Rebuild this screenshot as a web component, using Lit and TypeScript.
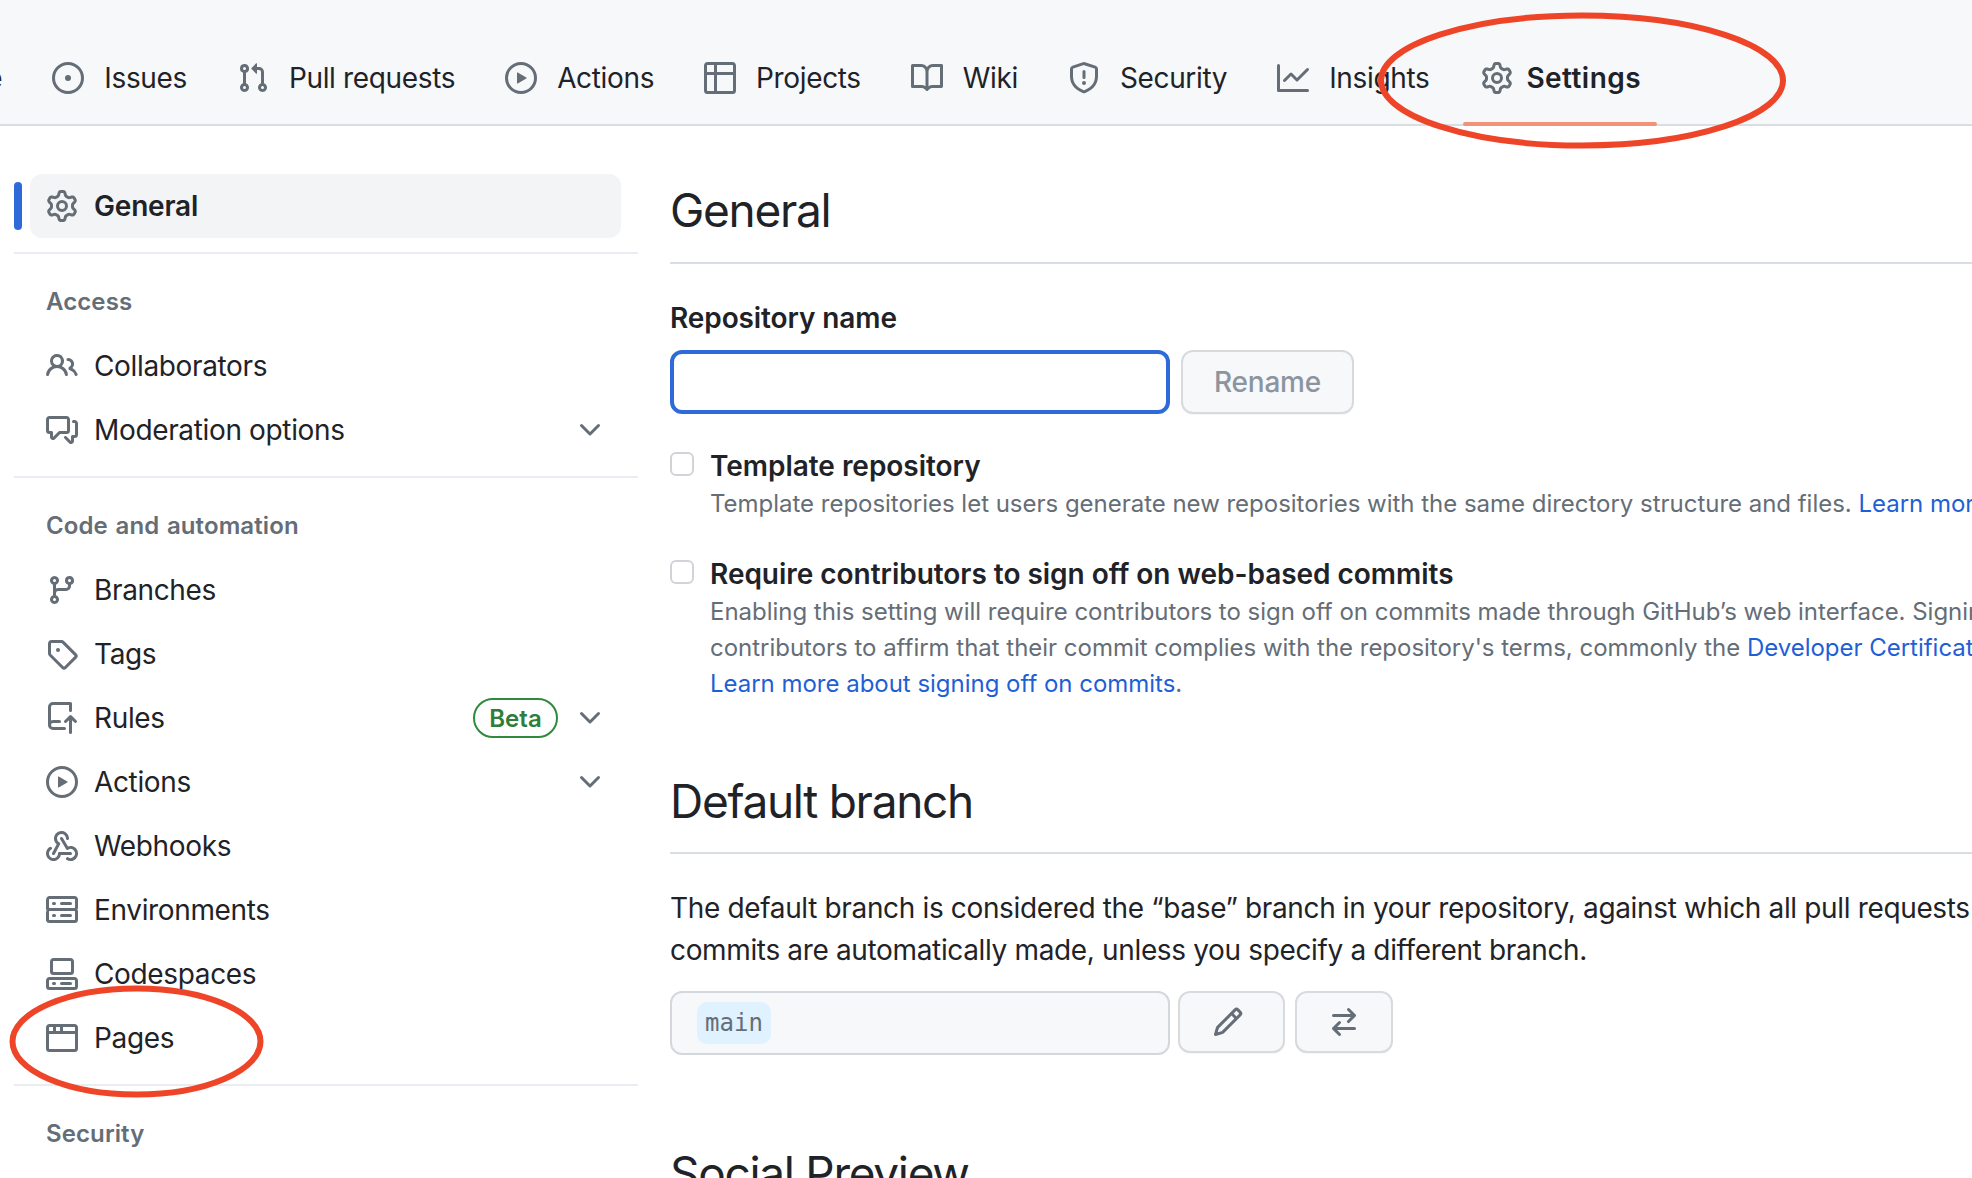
import { LitElement, html, css, svg } from "lit";
import { customElement } from "lit/decorators.js";

const P: Record<string, string> = {
  code: "m11.28 3.22 4.25 4.25a.75.75 0 0 1 0 1.06l-4.25 4.25a.749.749 0 0 1-1.275-.326.749.749 0 0 1 .215-.734L13.94 8l-3.72-3.72a.749.749 0 0 1 .326-1.275.749.749 0 0 1 .734.215Zm-6.56 0a.751.751 0 0 1 1.042.018.751.751 0 0 1 .018 1.042L2.06 8l3.72 3.72a.749.749 0 0 1-.326 1.275.749.749 0 0 1-.734-.215L.47 8.53a.75.75 0 0 1 0-1.06Z",
  issue: "M8 9.5a1.5 1.5 0 1 0 0-3 1.5 1.5 0 0 0 0 3ZM8 0a8 8 0 1 1 0 16A8 8 0 0 1 8 0ZM1.5 8a6.5 6.5 0 1 0 13 0 6.5 6.5 0 0 0-13 0Z",
  pull: "M1.5 3.25a2.25 2.25 0 1 1 3 2.122v5.256a2.251 2.251 0 1 1-1.5 0V5.372A2.25 2.25 0 0 1 1.5 3.25Zm5.677-.177L9.573.677A.25.25 0 0 1 10 .854V2.5h1A2.5 2.5 0 0 1 13.5 5v5.628a2.251 2.251 0 1 1-1.5 0V5a1 1 0 0 0-1-1h-1v1.646a.25.25 0 0 1-.427.177L7.177 3.427a.25.25 0 0 1 0-.354ZM3.75 2.5a.75.75 0 1 0 0 1.5.75.75 0 0 0 0-1.5Zm0 9.5a.75.75 0 1 0 0 1.5.75.75 0 0 0 0-1.5Zm8.25.75a.75.75 0 1 0 1.5 0 .75.75 0 0 0-1.5 0Z",
  play: "M8 0a8 8 0 1 1 0 16A8 8 0 0 1 8 0ZM1.5 8a6.5 6.5 0 1 0 13 0 6.5 6.5 0 0 0-13 0Zm4.879-2.773 4.264 2.559a.25.25 0 0 1 0 .428l-4.264 2.559A.25.25 0 0 1 6 10.559V5.442a.25.25 0 0 1 .379-.215Z",
  table: "M0 1.75C0 .784.784 0 1.75 0h12.5C15.216 0 16 .784 16 1.75v12.5A1.75 1.75 0 0 1 14.25 16H1.75A1.75 1.75 0 0 1 0 14.25ZM6.5 6.5v8h7.75a.25.25 0 0 0 .25-.25V6.5Zm8-1.5V1.75a.25.25 0 0 0-.25-.25H6.5V5Zm-13 1.5v7.75c0 .138.112.25.25.25H5v-8ZM5 5V1.5H1.75a.25.25 0 0 0-.25.25V5Z",
  book: "M0 1.75A.75.75 0 0 1 .75 1h4.253c1.227 0 2.317.59 3 1.501A3.743 3.743 0 0 1 11.006 1h4.245a.75.75 0 0 1 .75.75v10.5a.75.75 0 0 1-.75.75h-4.507a2.25 2.25 0 0 0-1.591.659l-.622.621a.75.75 0 0 1-1.06 0l-.622-.621A2.25 2.25 0 0 0 5.258 13H.75a.75.75 0 0 1-.75-.75Zm7.251 10.324.004-5.073-.002-2.253A2.25 2.25 0 0 0 5.003 2.5H1.5v9h3.757a3.75 3.75 0 0 1 1.994.574ZM8.755 4.75l-.004 7.322a3.752 3.752 0 0 1 1.992-.572H14.5v-9h-3.495a2.25 2.25 0 0 0-2.25 2.25Z",
  shield: "M7.467.133a1.748 1.748 0 0 1 1.066 0l5.25 1.68A1.75 1.75 0 0 1 15 3.48V7c0 1.566-.32 3.182-1.303 4.682-.983 1.498-2.585 2.813-5.032 3.855a1.697 1.697 0 0 1-1.33 0c-2.447-1.042-4.049-2.357-5.032-3.855C1.32 10.182 1 8.566 1 7V3.48a1.75 1.75 0 0 1 1.217-1.667Zm.61 1.429a.25.25 0 0 0-.153 0l-5.25 1.68a.25.25 0 0 0-.174.238V7c0 1.358.275 2.666 1.057 3.86.784 1.194 2.121 2.34 4.366 3.297a.196.196 0 0 0 .154 0c2.245-.956 3.582-2.104 4.366-3.298C13.225 9.666 13.5 8.36 13.5 7V3.48a.251.251 0 0 0-.174-.237l-5.25-1.68ZM8.75 4.75v3a.75.75 0 0 1-1.5 0v-3a.75.75 0 0 1 1.5 0ZM9 10.5a1 1 0 1 1-2 0 1 1 0 0 1 2 0Z",
  graph: "M1.5 1.75V13.5h13.75a.75.75 0 0 1 0 1.5H.75a.75.75 0 0 1-.75-.75V1.75a.75.75 0 0 1 1.5 0Zm14.28 2.53-5.25 5.25a.75.75 0 0 1-1.06 0L7 7.06 4.28 9.78a.751.751 0 0 1-1.042-.018.751.751 0 0 1-.018-1.042l3.25-3.25a.75.75 0 0 1 1.06 0L10 7.94l4.72-4.72a.751.751 0 0 1 1.042.018.751.751 0 0 1 .018 1.042Z",
  gear: "M8 0a8.2 8.2 0 0 1 .701.031C9.444.095 9.99.645 10.16 1.29l.288 1.107c.018.066.079.158.212.224.231.114.454.243.668.386.123.082.233.09.299.071l1.103-.303c.644-.176 1.392.021 1.82.63.27.385.506.792.704 1.218.315.675.111 1.422-.364 1.891l-.814.806c-.049.048-.098.147-.088.294.016.257.016.515 0 .772-.01.147.038.246.088.294l.814.806c.475.469.679 1.216.364 1.891a7.977 7.977 0 0 1-.704 1.217c-.428.61-1.176.807-1.82.63l-1.102-.302c-.067-.019-.177-.011-.3.071a5.909 5.909 0 0 1-.668.386c-.133.066-.194.158-.211.224l-.29 1.106c-.168.646-.715 1.196-1.458 1.26a8.006 8.006 0 0 1-1.402 0c-.743-.064-1.289-.614-1.458-1.26l-.289-1.106c-.018-.066-.079-.158-.212-.224a5.738 5.738 0 0 1-.668-.386c-.123-.082-.233-.09-.299-.071l-1.103.303c-.644.176-1.392-.021-1.82-.63a8.12 8.12 0 0 1-.704-1.218c-.315-.675-.111-1.422.363-1.891l.815-.806c.05-.048.098-.147.088-.294a6.214 6.214 0 0 1 0-.772c.01-.147-.038-.246-.088-.294l-.815-.806C.635 6.045.431 5.298.746 4.623a7.92 7.92 0 0 1 .704-1.217c.428-.61 1.176-.807 1.82-.63l1.102.302c.067.019.177.011.3-.071.214-.143.437-.272.668-.386.133-.066.194-.158.211-.224l.29-1.106C6.009.645 6.556.095 7.299.03 7.53.01 7.764 0 8 0Zm-.571 1.525c-.036.003-.108.036-.137.146l-.289 1.105c-.147.561-.549.967-.998 1.189-.173.086-.34.183-.5.29-.417.278-.97.423-1.529.27l-1.103-.303c-.109-.03-.175.016-.195.045-.22.312-.412.644-.573.99-.014.031-.021.11.059.19l.815.806c.411.406.562.957.53 1.456a4.709 4.709 0 0 0 0 .582c.032.499-.119 1.05-.53 1.456l-.815.806c-.081.08-.073.159-.059.19.162.346.353.677.573.989.02.03.085.076.195.046l1.102-.303c.56-.153 1.113-.008 1.53.27.161.107.328.204.501.29.447.222.85.629.997 1.189l.289 1.105c.029.109.101.143.137.146a6.6 6.6 0 0 0 1.142 0c.036-.003.108-.036.137-.146l.289-1.105c.147-.561.549-.967.998-1.189.173-.086.34-.183.5-.29.417-.278.97-.423 1.529-.27l1.103.303c.109.029.175-.016.195-.045.22-.313.411-.644.573-.99.014-.031.021-.11-.059-.19l-.815-.806c-.411-.406-.562-.957-.53-1.456a4.709 4.709 0 0 0 0-.582c-.032-.499.119-1.05.53-1.456l.815-.806c.081-.08.073-.159.059-.19a6.464 6.464 0 0 0-.573-.989c-.02-.03-.085-.076-.195-.046l-1.102.303c-.56.153-1.113.008-1.53-.27a4.44 4.44 0 0 0-.501-.29c-.447-.222-.85-.629-.997-1.189l-.289-1.105c-.029-.11-.101-.143-.137-.146a6.6 6.6 0 0 0-1.142 0ZM11 8a3 3 0 1 1-6 0 3 3 0 0 1 6 0ZM9.5 8a1.5 1.5 0 1 0-3.001.001A1.5 1.5 0 0 0 9.5 8Z",
  people: "M2 5.5a3.5 3.5 0 1 1 5.898 2.549 5.508 5.508 0 0 1 3.034 4.084.75.75 0 1 1-1.482.235 4 4 0 0 0-7.9 0 .75.75 0 0 1-1.482-.236A5.507 5.507 0 0 1 3.102 8.05 3.493 3.493 0 0 1 2 5.5ZM11 4a3.001 3.001 0 0 1 2.22 5.018 5.01 5.01 0 0 1 2.56 3.012.749.749 0 0 1-.885.954.752.752 0 0 1-.549-.514 3.507 3.507 0 0 0-2.522-2.372.75.75 0 0 1-.574-.73v-.352a.75.75 0 0 1 .416-.672A1.5 1.5 0 0 0 11 5.5.75.75 0 0 1 11 4Zm-5.5-.5a2 2 0 1 0-.001 3.999A2 2 0 0 0 5.5 3.5Z",
  discussion: "M1.75 1h8.5c.966 0 1.75.784 1.75 1.75v5.5A1.75 1.75 0 0 1 10.25 10H7.061l-2.574 2.573A1.458 1.458 0 0 1 2 11.543V10h-.25A1.75 1.75 0 0 1 0 8.25v-5.5C0 1.784.784 1 1.75 1ZM1.5 2.75v5.5c0 .138.112.25.25.25h1a.75.75 0 0 1 .75.75v2.19l2.72-2.72a.749.749 0 0 1 .53-.22h3.5a.25.25 0 0 0 .25-.25v-5.5a.25.25 0 0 0-.25-.25h-8.5a.25.25 0 0 0-.25.25Zm13 2a.25.25 0 0 0-.25-.25h-.5a.75.75 0 0 1 0-1.5h.5c.966 0 1.75.784 1.75 1.75v5.5A1.75 1.75 0 0 1 14.25 12H14v1.543a1.458 1.458 0 0 1-2.487 1.03L9.22 12.28a.749.749 0 0 1 .326-1.275.749.749 0 0 1 .734.215l2.22 2.22v-2.19a.75.75 0 0 1 .75-.75h1a.25.25 0 0 0 .25-.25Z",
  branch: "M9.5 3.25a2.25 2.25 0 1 1 3 2.122V6A2.5 2.5 0 0 1 10 8.5H6a1 1 0 0 0-1 1v1.128a2.251 2.251 0 1 1-1.5 0V5.372a2.25 2.25 0 1 1 1.5 0v1.836A2.493 2.493 0 0 1 6 7h4a1 1 0 0 0 1-1v-.628A2.25 2.25 0 0 1 9.5 3.25Zm-6 0a.75.75 0 1 0 1.5 0 .75.75 0 0 0-1.5 0Zm8.25-.75a.75.75 0 1 0 0 1.5.75.75 0 0 0 0-1.5ZM4.25 12a.75.75 0 1 0 0 1.5.75.75 0 0 0 0-1.5Z",
  tag: "M1 7.775V2.75C1 1.784 1.784 1 2.75 1h5.025c.464 0 .91.184 1.238.513l6.25 6.25a1.75 1.75 0 0 1 0 2.474l-5.026 5.026a1.75 1.75 0 0 1-2.474 0l-6.25-6.25A1.752 1.752 0 0 1 1 7.775Zm1.5 0c0 .066.026.13.073.177l6.25 6.25a.25.25 0 0 0 .354 0l5.025-5.025a.25.25 0 0 0 0-.354l-6.25-6.25a.25.25 0 0 0-.177-.073H2.75a.25.25 0 0 0-.25.25ZM6 5a1 1 0 1 1 0 2 1 1 0 0 1 0-2Z",
  push: "M1 2.5A2.5 2.5 0 0 1 3.5 0h8.75a.75.75 0 0 1 .75.75v3.5a.75.75 0 0 1-1.5 0V1.5h-8a1 1 0 0 0-1 1v6.708A2.493 2.493 0 0 1 3.5 9h3.25a.75.75 0 0 1 0 1.5H3.5a1 1 0 0 0 0 2h5.75a.75.75 0 0 1 0 1.5H3.5A2.5 2.5 0 0 1 1 11.5Zm13.23 7.79h-.001l-1.224-1.224v6.184a.75.75 0 0 1-1.5 0V9.066L10.28 10.29a.75.75 0 0 1-1.06-1.061l2.505-2.504a.75.75 0 0 1 1.06 0L15.29 9.23a.751.751 0 0 1-.018 1.042.751.751 0 0 1-1.042.018Z",
  webhook: "M5.5 4.25a2.25 2.25 0 0 1 4.5 0 .75.75 0 0 0 1.5 0 3.75 3.75 0 1 0-6.14 2.889l-2.272 4.258a.75.75 0 0 0 1.324.706L7 7.25a.75.75 0 0 0-.309-1.015A2.25 2.25 0 0 1 5.5 4.25ZM7.364 3.607a.75.75 0 0 1 1.03.257l2.608 4.349a3.75 3.75 0 1 1-.628 6.785.75.75 0 0 1 .752-1.299 2.25 2.25 0 1 0-.033-3.88.75.75 0 0 1-1.03-.256L7.107 4.636a.75.75 0 0 1 .257-1.03ZM2.9 8.776A.75.75 0 0 1 2.625 9.8 2.25 2.25 0 1 0 6 11.75a.75.75 0 0 1 .75-.751h5.5a.75.75 0 0 1 0 1.5H7.425a3.751 3.751 0 1 1-5.55-3.998.75.75 0 0 1 1.024.274Z",
  server: "M1.75 1h12.5c.966 0 1.75.784 1.75 1.75v4c0 .372-.116.717-.314 1 .198.283.314.628.314 1v4a1.75 1.75 0 0 1-1.75 1.75H1.75A1.75 1.75 0 0 1 0 13.25v-4c0-.372.116-.717.314-1a1.739 1.739 0 0 1-.314-1v-4C0 1.784.784 1 1.75 1ZM1.5 2.75v4c0 .138.112.25.25.25h12.5a.25.25 0 0 0 .25-.25v-4a.25.25 0 0 0-.25-.25H1.75a.25.25 0 0 0-.25.25Zm.25 5.75a.25.25 0 0 0-.25.25v4c0 .138.112.25.25.25h12.5a.25.25 0 0 0 .25-.25v-4a.25.25 0 0 0-.25-.25ZM7 4.75A.75.75 0 0 1 7.75 4h4.5a.75.75 0 0 1 0 1.5h-4.5A.75.75 0 0 1 7 4.75ZM7.75 10h4.5a.75.75 0 0 1 0 1.5h-4.5a.75.75 0 0 1 0-1.5ZM3 4.75A.75.75 0 0 1 3.75 4h.5a.75.75 0 0 1 0 1.5h-.5A.75.75 0 0 1 3 4.75ZM3.75 10h.5a.75.75 0 0 1 0 1.5h-.5a.75.75 0 0 1 0-1.5Z",
  codespaces: "M0 11.25c0-.966.784-1.75 1.75-1.75h12.5c.966 0 1.75.784 1.75 1.75v3A1.75 1.75 0 0 1 14.25 16H1.75A1.75 1.75 0 0 1 0 14.25Zm2-9.5C2 .784 2.784 0 3.75 0h8.5C13.216 0 14 .784 14 1.75v5a1.75 1.75 0 0 1-1.75 1.75h-8.5A1.75 1.75 0 0 1 2 6.75Zm1.75-.25a.25.25 0 0 0-.25.25v5c0 .138.112.25.25.25h8.5a.25.25 0 0 0 .25-.25v-5a.25.25 0 0 0-.25-.25Zm-2 9.5a.25.25 0 0 0-.25.25v3c0 .138.112.25.25.25h12.5a.25.25 0 0 0 .25-.25v-3a.25.25 0 0 0-.25-.25ZM7 12.75a.75.75 0 0 1 .75-.75h4.5a.75.75 0 0 1 0 1.5h-4.5a.75.75 0 0 1-.75-.75Zm-4 0a.75.75 0 0 1 .75-.75h.5a.75.75 0 0 1 0 1.5h-.5a.75.75 0 0 1-.75-.75Z",
  browser: "M0 2.75C0 1.784.784 1 1.75 1h12.5c.966 0 1.75.784 1.75 1.75v10.5A1.75 1.75 0 0 1 14.25 15H1.75A1.75 1.75 0 0 1 0 13.25ZM14.5 6h-13v7.25c0 .138.112.25.25.25h12.5a.25.25 0 0 0 .25-.25Zm-6-3.5v2h6V2.75a.25.25 0 0 0-.25-.25ZM5 2.5v2h2v-2Zm-3.25 0a.25.25 0 0 0-.25.25V4.5h2v-2Z",
  chevron: "M12.78 5.22a.749.749 0 0 1 0 1.06l-4.25 4.25a.749.749 0 0 1-1.06 0L3.22 6.28a.749.749 0 1 1 1.06-1.06L8 8.939l3.72-3.719a.749.749 0 0 1 1.06 0Z",
  pencil: "M11.013 1.427a1.75 1.75 0 0 1 2.474 0l1.086 1.086a1.75 1.75 0 0 1 0 2.474l-8.61 8.61c-.21.21-.47.364-.756.445l-3.251.93a.75.75 0 0 1-.927-.928l.929-3.25c.081-.286.235-.547.445-.758l8.61-8.61Zm.176 4.823L9.75 4.81l-6.286 6.287a.253.253 0 0 0-.064.108l-.558 1.953 1.953-.558a.253.253 0 0 0 .108-.064Zm1.238-3.763a.25.25 0 0 0-.354 0L10.811 3.75l1.439 1.44 1.263-1.263a.25.25 0 0 0 0-.354Z",
  swap: "M5.22 14.78a.75.75 0 0 0 1.06-1.06L4.56 12h8.69a.75.75 0 0 0 0-1.5H4.56l1.72-1.72a.75.75 0 0 0-1.06-1.06l-3 3a.75.75 0 0 0 0 1.06l3 3Zm5.56-6.5a.75.75 0 1 1-1.06-1.06l1.72-1.72H2.75a.75.75 0 0 1 0-1.5h8.69L9.72 2.28a.75.75 0 0 1 1.06-1.06l3 3a.75.75 0 0 1 0 1.06l-3 3Z",
};

const icon = (n: string) =>
  html`<svg class="icon" viewBox="0 0 16 16" aria-hidden="true">${svg`<path d=${P[n]}></path>`}</svg>`;

const TABS = [
  ["code", "Code"], ["issue", "Issues"], ["pull", "Pull requests"], ["play", "Actions"],
  ["table", "Projects"], ["book", "Wiki"], ["shield", "Security"], ["graph", "Insights"], ["gear", "Settings"],
];

type Row = { i: string; t: string; chev?: boolean; beta?: boolean };
const ACCESS: Row[] = [
  { i: "people", t: "Collaborators" },
  { i: "discussion", t: "Moderation options", chev: true },
];
const CODE: Row[] = [
  { i: "branch", t: "Branches" },
  { i: "tag", t: "Tags" },
  { i: "push", t: "Rules", chev: true, beta: true },
  { i: "play", t: "Actions", chev: true },
  { i: "webhook", t: "Webhooks" },
  { i: "server", t: "Environments" },
  { i: "codespaces", t: "Codespaces" },
  { i: "browser", t: "Pages" },
];

@customElement("app-root")
export class AppRoot extends LitElement {
  static styles = css`
    :host {
      display: block;
      position: relative;
      width: 1972px;
      height: 1178px;
      overflow: hidden;
      background: #fff;
      color: #1f2328;
      font-family: Inter, "Liberation Sans", sans-serif;
      font-size: 28px;
    }
    .icon { width: 32px; height: 32px; fill: #656d76; flex: none; display: block; }
    .tabs {
      height: 124px;
      box-sizing: content-box;
      border-bottom: 2px solid #d8dee4;
      background: #f6f8fa;
      display: flex;
      align-items: stretch;
      gap: 18px;
      margin-left: -135px;
      white-space: nowrap;
    }
    .tab {
      position: relative;
      display: flex;
      align-items: center;
      gap: 20px;
      padding: 32px 16px 0;
      letter-spacing: -0.35px;
    }
    .tab.on { font-weight: 600; gap: 13px; padding-left: 18px; letter-spacing: 0.45px; }
    .tab.on::after {
      content: "";
      position: absolute;
      left: 0; right: 0; bottom: -2px;
      height: 4px;
      background: #f29279;
      border-radius: 2px;
    }
    .page { display: flex; padding-top: 48px; }
    .side { width: 624px; margin-left: 14px; flex: none; }
    .active-wrap { display: flex; align-items: center; gap: 8px; }
    .bar { width: 8px; height: 48px; border-radius: 4px; background: #2f6bd8; }
    .row {
      display: flex;
      align-items: center;
      height: 64px;
      padding: 0 32px 0 32px;
      gap: 16px;
      letter-spacing: -0.35px;
      white-space: nowrap;
    }
    .row .label { flex: 1; }
    .row.on {
      flex: none;
      width: 591px;
      box-sizing: border-box;
      padding-left: 16px;
      background: #f3f4f6;
      border-radius: 12px;
      font-weight: 600;
      letter-spacing: -0.2px;
    }
    .rule { height: 2px; background: #e9edf1; margin: 14px 0 32px; }
    .head {
      height: 32px;
      line-height: 32px;
      padding-left: 32px;
      margin-bottom: 16px;
      font-size: 24px;
      font-weight: 600;
      color: #656d76;
      letter-spacing: 0.1px;
      word-spacing: 1.5px;
    }
    .beta {
      display: flex;
      align-items: center;
      justify-content: center;
      box-sizing: border-box;
      width: 85px;
      height: 40px;
      border: 2px solid #2f8a3e;
      border-radius: 20px;
      font-size: 24px;
      font-weight: 600;
      color: #2f7d3b;
      letter-spacing: 0;
    }
    .main { flex: none; width: 1302px; margin-left: 32px; white-space: nowrap; }
    h2 {
      margin: 0;
      font-size: 46px;
      line-height: 72px;
      font-weight: 400;
      letter-spacing: -1.3px;
      padding-bottom: 16px;
      border-bottom: 2px solid #d8dee4;
    }
    .name-label { margin-top: 33px; font-weight: 600; line-height: 42px; letter-spacing: -0.1px; }
    .name-row { display: flex; gap: 11px; margin-top: 11px; }
    .input {
      width: 500px; height: 64px; box-sizing: border-box;
      border: 4px solid #2f6bd8; border-radius: 12px; background: #fff;
    }
    .btn {
      display: flex; align-items: center; justify-content: center;
      box-sizing: border-box;
      border: 2px solid #d8dadd; border-radius: 12px; background: #f6f8fa;
      box-shadow: 0 1px 0 rgba(31, 35, 40, 0.04);
    }
    .rename { width: 173px; height: 64px; font-weight: 500; color: #8c959f; letter-spacing: -0.2px; }
    .check { display: flex; gap: 16px; }
    .check.a { margin-top: 34px; }
    .check.b { margin-top: 34px; }
    .box {
      flex: none; box-sizing: border-box; width: 24px; height: 24px; margin-top: 4px;
      border: 2px solid #d0d3d7; border-radius: 6px; background: #fff;
    }
    .c-title { font-weight: 600; line-height: 36px; letter-spacing: -0.03px; margin-bottom: 2px; }
    .c-desc { font-size: 24px; line-height: 36px; color: #656d76; letter-spacing: -0.02px; }
    a { color: #1f5fd6; text-decoration: none; }
    h2.def { margin-top: 63px; padding-bottom: 15px; }
    .para { margin-top: 33px; line-height: 42px; letter-spacing: -0.35px; }
    .branch-row { display: flex; gap: 8px; align-items: flex-start; margin-top: 20px; }
    .branch-box {
      display: flex; align-items: center;
      box-sizing: border-box; width: 500px; height: 64px; padding-left: 25px;
      border: 2px solid #d4d7dc; border-radius: 12px; background: #f6f8fa;
    }
    .pill {
      display: flex; align-items: center; justify-content: center;
      width: 74px; height: 42px; border-radius: 10px; background: #e0f1ff;
      font-family: "DejaVu Sans Mono", "Liberation Mono", monospace;
      font-size: 24px; letter-spacing: 0; color: #656d76;
    }
    .ib { height: 62px; }
    .ib.p { width: 107px; padding-right: 8px; }
    .ib.s { width: 98px; margin-left: 2px; }
    h2.social { margin-top: 82px; border: 0; }
    .marks { position: absolute; left: 0; top: 0; width: 1972px; height: 1178px; pointer-events: none; }
    .marks ellipse { fill: none; stroke: #ee4528; stroke-width: 6; }
  `;

  private row(r: Row) {
    return html`<div class="row">
      ${icon(r.i)}<span class="label">${r.t}</span>
      ${r.beta ? html`<span class="beta">Beta</span>` : ""}
      ${r.chev ? icon("chevron") : ""}
    </div>`;
  }

  render() {
    return html`
      <nav class="tabs">
        ${TABS.map(([i, t]) => html`<div class="tab ${t === "Settings" ? "on" : ""}">${icon(i)}<span>${t}</span></div>`)}
      </nav>
      <div class="page">
        <aside class="side">
          <div class="active-wrap">
            <div class="bar"></div>
            <div class="row on">${icon("gear")}<span class="label">General</span></div>
          </div>
          <div class="rule"></div>
          <div class="head">Access</div>
          ${ACCESS.map((r) => this.row(r))}
          <div class="rule"></div>
          <div class="head">Code and automation</div>
          ${CODE.map((r) => this.row(r))}
          <div class="rule"></div>
          <div class="head">Security</div>
        </aside>
        <main class="main">
          <h2>General</h2>
          <div class="name-label">Repository name</div>
          <div class="name-row">
            <div class="input"></div>
            <div class="btn rename">Rename</div>
          </div>
          <div class="check a">
            <div class="box"></div>
            <div>
              <div class="c-title">Template repository</div>
              <div class="c-desc">Template repositories let users generate new repositories with the same directory structure and files. <a>Learn more.</a></div>
            </div>
          </div>
          <div class="check b">
            <div class="box"></div>
            <div>
              <div class="c-title">Require contributors to sign off on web-based commits</div>
              <div class="c-desc">Enabling this setting will require contributors to sign off on commits made through GitHub’s web interface. Signing off is a way for</div>
              <div class="c-desc">contributors to affirm that their commit complies with the repository's terms, commonly the <a>Developer Certificate of Origin.</a></div>
              <div class="c-desc"><a>Learn more about signing off on commits</a>.</div>
            </div>
          </div>
          <h2 class="def">Default branch</h2>
          <div class="para">The default branch is considered the “base” branch in your repository, against which all pull requests are made<br />commits are automatically made, unless you specify a different branch.</div>
          <div class="branch-row">
            <div class="branch-box"><span class="pill">main</span></div>
            <div class="btn ib p">${icon("pencil")}</div>
            <div class="btn ib s">${icon("swap")}</div>
          </div>
          <h2 class="social">Social Preview</h2>
        </main>
      </div>
      <svg class="marks" viewBox="0 0 1972 1178" aria-hidden="true">
        <ellipse cx="1582" cy="80.5" rx="201" ry="65"></ellipse>
        <ellipse cx="136.5" cy="1041.5" rx="124" ry="53"></ellipse>
      </svg>
    `;
  }
}
